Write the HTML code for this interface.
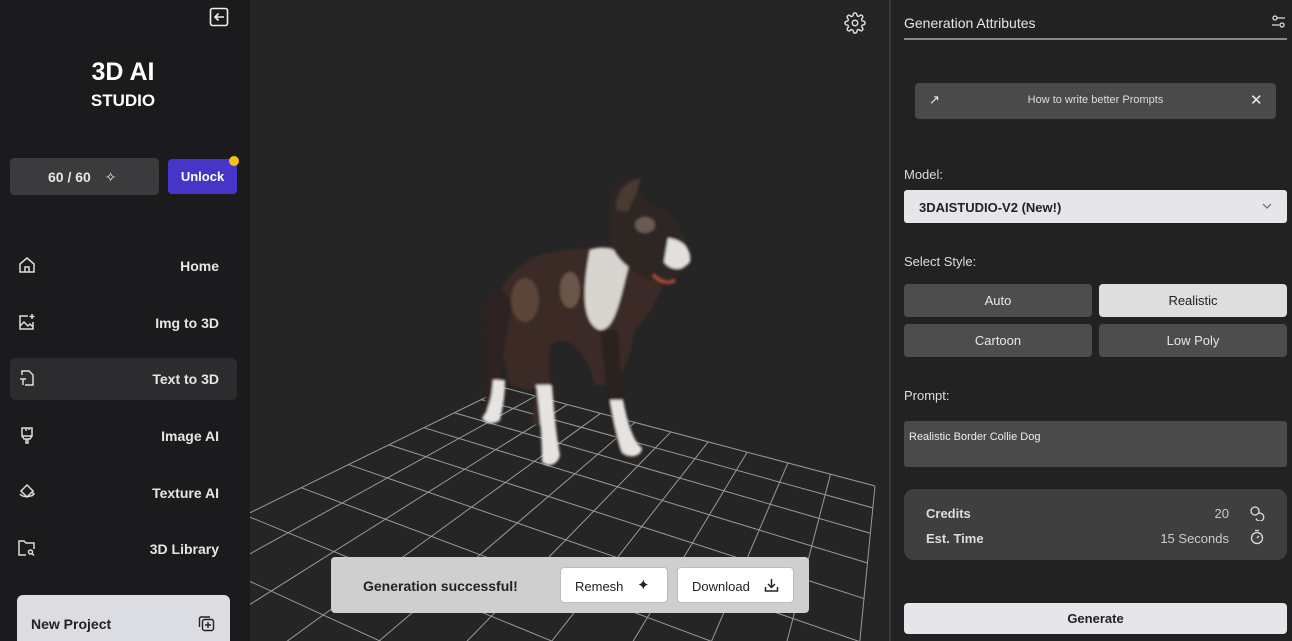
<!DOCTYPE html>
<html style="overflow:hidden;height:641px"><head><meta charset="utf-8"><style>
*{box-sizing:border-box;margin:0;padding:0}
body{width:1292px;height:641px;overflow:hidden;background:#242424;font-family:"Liberation Sans",sans-serif;position:relative}
.side{position:absolute;left:0;top:0;width:250px;height:641px;background:#1b1b1d;overflow:hidden}
.main{position:absolute;left:250px;top:0;width:639px;height:641px;background:#252525;overflow:hidden}
.right{position:absolute;left:889px;top:0;width:403px;height:641px;background:#222;border-left:2px solid #3a3a3a;overflow:hidden}
.abs{position:absolute}
.t{color:#e8e8e8}
.nav{position:absolute;left:10px;width:227px;height:42px;border-radius:6px;font-size:14px;font-weight:bold;color:#e6e6e6}
.nav span{position:absolute;right:18px;top:13px}
.nav svg{position:absolute;left:8px;top:11px}
.btn{position:absolute;border-radius:4px;font-size:13px;text-align:center;color:#e6e6e6}
</style></head><body>
<div class="side">
 <svg class="abs" style="left:209px;top:7px" width="20" height="20" viewBox="0 0 20 20" fill="none" stroke="#eee" stroke-width="1.6"><rect x="1.5" y="1.5" width="17" height="17" rx="2"/><path d="M15 10H6M9.5 6.5L6 10l3.5 3.5"/></svg>
 <div class="abs t" style="left:0;width:246px;top:58px;text-align:center;font-size:25px;font-weight:bold;color:#fff">3D AI</div>
 <div class="abs t" style="left:0;width:246px;top:91px;text-align:center;font-size:17px;font-weight:bold;color:#fff">STUDIO</div>
 <div class="abs" style="left:10px;top:158px;width:149px;height:37px;background:#3b3b3d;border-radius:4px;color:#e6e6e6;font-size:14px;font-weight:bold;padding:11px 0 0 38px">60 / 60 <span style="margin-left:10px;font-weight:normal">✧</span></div>
 <div class="abs" style="left:168px;top:159px;width:69px;height:35px;background:#4536c8;border-radius:4px;color:#fff;font-size:13px;font-weight:bold;text-align:center;line-height:35px">Unlock</div>
 <div class="abs" style="left:229px;top:156px;width:10px;height:10px;border-radius:50%;background:#f5c211"></div>
 <div class="nav" style="top:245px"><svg width="18" height="18" viewBox="0 0 18 18" fill="none" stroke="#ddd" stroke-width="1.5"><path d="M2 8L9 2l7 6v8H2z"/><path d="M7 16v-5h4v5"/></svg><span>Home</span></div>
 <div class="nav" style="top:302px"><svg width="18" height="18" viewBox="0 0 18 18" fill="none" stroke="#ddd" stroke-width="1.5"><path d="M10 3H2v13h13V9"/><path d="M2 13l4-4 4 4 2-2 3 3"/><path d="M14 1v5M11.5 3.5h5"/></svg><span>Img to 3D</span></div>
 <div class="nav" style="top:358px;background:#2c2c2e"><svg width="18" height="18" viewBox="0 0 18 18" fill="none" stroke="#ddd" stroke-width="1.5"><path d="M4 6V2h7l4 4v10H7"/><path d="M2 10h6M5 10v6"/></svg><span>Text to 3D</span></div>
 <div class="nav" style="top:415px"><svg width="18" height="18" viewBox="0 0 18 18" fill="none" stroke="#ddd" stroke-width="1.5"><path d="M4 2h10v8H4zM4 10l2 3h6l2-3M8 13v4h2v-4M8 2v3M11 2v2"/></svg><span>Image AI</span></div>
 <div class="nav" style="top:472px"><svg width="18" height="18" viewBox="0 0 18 18" fill="none" stroke="#ddd" stroke-width="1.5"><path d="M9 2l6 6-6 6-6-6z"/><path d="M2 11c2 3 10 4 14 0M14 9l2 2-2 2"/></svg><span>Texture AI</span></div>
 <div class="nav" style="top:528px"><svg width="18" height="18" viewBox="0 0 18 18" fill="none" stroke="#ddd" stroke-width="1.5"><path d="M8 16H1V2h5l2 2h8v6"/><circle cx="12.5" cy="13" r="2"/><path d="M14 14.5l2 2"/></svg><span>3D Library</span></div>
 <div class="abs" style="left:17px;top:595px;width:213px;height:46px;background:#dcdde2;border-radius:6px 6px 0 0;color:#222;font-size:14px;font-weight:bold;padding:21px 0 0 14px">New Project
  <svg class="abs" style="left:181px;top:20px" width="17" height="17" viewBox="0 0 17 17" fill="none" stroke="#222" stroke-width="1.4"><rect x="4.5" y="4.5" width="11" height="11" rx="2"/><path d="M12 2H3a1.5 1.5 0 0 0-1.5 1.5V12M10 7v6M7 10h6"/></svg></div>
</div>
<div class="main">
 <svg id="grid" class="abs" style="left:0;top:0" width="639" height="641"></svg>
 <svg class="abs" style="left:594px;top:12px" width="22" height="22" viewBox="0 0 24 24" fill="none" stroke="#ddd" stroke-width="1.6"><circle cx="12" cy="12" r="3"/><path d="M19.4 15a1.7 1.7 0 0 0 .3 1.8l.1.1a2 2 0 1 1-2.8 2.8l-.1-.1a1.7 1.7 0 0 0-1.8-.3 1.7 1.7 0 0 0-1 1.5V21a2 2 0 1 1-4 0v-.1a1.7 1.7 0 0 0-1.1-1.5 1.7 1.7 0 0 0-1.8.3l-.1.1a2 2 0 1 1-2.8-2.8l.1-.1a1.7 1.7 0 0 0 .3-1.8 1.7 1.7 0 0 0-1.5-1H3a2 2 0 1 1 0-4h.1a1.7 1.7 0 0 0 1.5-1.1 1.7 1.7 0 0 0-.3-1.8l-.1-.1a2 2 0 1 1 2.8-2.8l.1.1a1.7 1.7 0 0 0 1.8.3H9a1.7 1.7 0 0 0 1-1.5V3a2 2 0 1 1 4 0v.1a1.7 1.7 0 0 0 1 1.5 1.7 1.7 0 0 0 1.8-.3l.1-.1a2 2 0 1 1 2.8 2.8l-.1.1a1.7 1.7 0 0 0-.3 1.8V9a1.7 1.7 0 0 0 1.5 1H21a2 2 0 1 1 0 4h-.1a1.7 1.7 0 0 0-1.5 1z"/></svg>
 <svg class="abs" style="left:0;top:0" width="639" height="641">
  <defs><filter id="bl"><feGaussianBlur stdDeviation="1.2"/></filter></defs>
  <g filter="url(#bl)">
   <path d="M245 330 C240 300 255 270 290 255 C330 245 360 250 380 240 L400 230 C420 225 425 240 420 260 C410 300 395 320 385 330 C380 360 370 380 360 385 L345 385 C340 360 320 330 300 345 C295 370 290 390 280 390 L260 385 C255 360 250 345 245 330Z" fill="#3a2c26"/>
   <path d="M235 320 C232 300 240 290 250 288 L262 300 C258 330 252 360 248 395 L242 410 L235 408 C236 380 237 350 235 320Z" fill="#2e2420"/>
   <ellipse cx="275" cy="300" rx="14" ry="22" fill="#5a4538"/>
   <ellipse cx="320" cy="290" rx="10" ry="18" fill="#6b5648"/>
   <path d="M340 250 C355 245 370 250 380 260 C370 300 365 330 350 330 C335 325 330 300 340 250Z" fill="#d8d4d0"/>
   <path d="M360 200 C365 185 375 180 380 178 L388 185 L395 200 L420 215 C445 240 440 265 425 280 L400 280 C380 270 365 260 360 240Z" fill="#2f2724"/>
   <ellipse cx="395" cy="225" rx="10" ry="8" fill="#6a5a52"/>
   <path d="M390 180 C385 200 380 205 378 212 L366 210 C366 195 372 182 392 178Z" fill="#4a3a33"/>
   <path d="M418 238 C432 240 442 248 440 262 C432 272 420 270 414 262Z" fill="#e2e0de"/>
   <path d="M403 275 C410 282 420 285 425 280" stroke="#b04a3a" stroke-width="3" fill="none"/>
   <path d="M287 330 L300 335 L300 395 C303 410 305 420 300 425 L283 425 C282 410 285 400 286 390Z" fill="#3a2c26"/>
   <path d="M350 330 L368 330 L372 395 C378 420 385 440 390 452 C385 458 372 458 368 450 L358 400Z" fill="#2b211d"/>
   <path d="M243 380 L255 380 C255 400 252 410 250 420 C245 425 235 424 232 418 C238 410 242 400 243 380Z" fill="#e6e3e0"/>
   <path d="M286 385 L302 385 C304 410 306 435 310 455 C308 465 298 468 292 462 C292 440 290 410 286 385Z" fill="#e6e3e0"/>
   <path d="M360 400 L373 400 C376 420 382 440 392 448 C392 456 380 460 372 452 C368 440 363 420 360 400Z" fill="#e6e3e0"/>
  </g>
 </svg>
 <div class="abs" style="left:81px;top:557px;width:478px;height:56px;background:#cfcfcf;border-radius:4px">
  <div class="abs" style="left:32px;top:21px;font-size:14px;color:#222;font-weight:bold">Generation successful!</div>
  <div class="abs" style="left:229px;top:10px;width:108px;height:36px;background:#fff;border-radius:4px;border:1px solid #bbb;font-size:13px;color:#222;padding:11px 0 0 14px">Remesh <span style="position:absolute;left:76px;top:8px;font-size:15px">✦</span></div>
  <div class="abs" style="left:346px;top:10px;width:117px;height:36px;background:#fff;border-radius:4px;border:1px solid #bbb;font-size:13px;color:#222;padding:11px 0 0 14px">Download
   <svg class="abs" style="left:86px;top:10px" width="15" height="15" viewBox="0 0 15 15" fill="none" stroke="#222" stroke-width="1.5"><path d="M7.5 1v8M4 6l3.5 3.5L11 6M1.5 9v4h12V9"/></svg></div>
 </div>
</div>
<div class="right">
 <div class="abs" style="left:13px;top:15px;font-size:14px;color:#e6e6e6">Generation Attributes</div>
 <svg class="abs" style="left:380px;top:14px" width="15" height="15" viewBox="0 0 15 15" fill="none" stroke="#ddd" stroke-width="1.3"><circle cx="4" cy="4" r="2"/><path d="M6 4h8M1 11h7"/><circle cx="11" cy="11" r="2"/></svg>
 <div class="abs" style="left:13px;top:38px;width:383px;height:2px;background:#888"></div>
 <div class="abs" style="left:24px;top:83px;width:361px;height:36px;background:#4a4a4a;border-radius:4px">
  <div class="abs" style="left:0;width:361px;top:11px;text-align:center;font-size:11px;color:#ddd">How to write better Prompts</div>
  <div class="abs" style="left:14px;top:9px;color:#eee;font-size:13px">↗</div>
  <div class="abs" style="left:335px;top:8px;color:#eee;font-size:15px">✕</div>
 </div>
 <div class="abs" style="left:13px;top:167px;font-size:13px;color:#ddd">Model:</div>
 <div class="abs" style="left:13px;top:190px;width:383px;height:33px;background:#e6e6ea;border-radius:3px;font-size:13px;font-weight:bold;color:#222;padding:10px 0 0 15px">3DAISTUDIO-V2 (New!)
  <svg class="abs" style="left:358px;top:12px" width="10" height="8" viewBox="0 0 10 8" fill="none" stroke="#666" stroke-width="1.2"><path d="M1 2l4 4 4-4"/></svg></div>
 <div class="abs" style="left:13px;top:254px;font-size:13px;color:#ddd">Select Style:</div>
 <div class="btn" style="left:13px;top:284px;width:188px;height:33px;background:#4d4d4d;line-height:33px">Auto</div>
 <div class="btn" style="left:208px;top:284px;width:188px;height:33px;background:#dedede;color:#222;line-height:33px">Realistic</div>
 <div class="btn" style="left:13px;top:324px;width:188px;height:33px;background:#4d4d4d;line-height:33px">Cartoon</div>
 <div class="btn" style="left:208px;top:324px;width:188px;height:33px;background:#4d4d4d;line-height:33px">Low Poly</div>
 <div class="abs" style="left:13px;top:388px;font-size:13px;color:#ddd">Prompt:</div>
 <div class="abs" style="left:13px;top:421px;width:383px;height:46px;background:#4a4a4a;border-radius:3px;font-size:11px;color:#eee;padding:10px 0 0 5px">Realistic Border Collie Dog</div>
 <div class="abs" style="left:13px;top:489px;width:383px;height:71px;background:#3f3f3f;border-radius:10px">
  <div class="abs" style="left:22px;top:17px;font-size:13px;font-weight:bold;color:#ddd">Credits</div>
  <div class="abs" style="left:22px;top:42px;font-size:13px;font-weight:bold;color:#ddd">Est. Time</div>
  <div class="abs" style="right:58px;top:17px;font-size:13px;color:#ccc">20</div>
  <div class="abs" style="right:58px;top:42px;font-size:13px;color:#ccc">15 Seconds</div>
  <svg class="abs" style="left:345px;top:16px" width="16" height="16" viewBox="0 0 16 16" fill="none" stroke="#ddd" stroke-width="1.3"><circle cx="6" cy="6" r="4"/><path d="M9 8.5a4 4 0 1 1-2 5"/></svg>
  <svg class="abs" style="left:345px;top:40px" width="16" height="16" viewBox="0 0 16 16" fill="none" stroke="#ddd" stroke-width="1.3"><circle cx="8" cy="9" r="5.5"/><path d="M6 1.5h4M8 9l2-2"/></svg>
 </div>
 <div class="abs" style="left:13px;top:603px;width:383px;height:31px;background:#e6e6ea;border-radius:4px;font-size:13px;font-weight:bold;color:#222;text-align:center;line-height:31px">Generate</div>
</div>
<script>
(function(){
 var F=[255,388],R=[625,486],N=[560,1150],L=[-260,640];
 function H(p){
  var x0=F[0],y0=F[1],x1=R[0],y1=R[1],x2=N[0],y2=N[1],x3=L[0],y3=L[1];
  var dx1=x1-x2,dx2=x3-x2,dy1=y1-y2,dy2=y3-y2,sx=x0-x1+x2-x3,sy=y0-y1+y2-y3;
  var det=dx1*dy2-dx2*dy1;
  var g=(sx*dy2-dx2*sy)/det,h=(dx1*sy-sx*dy1)/det;
  var a=x1-x0+g*x1,b=x3-x0+h*x3,c=x0,d=y1-y0+g*y1,e=y3-y0+h*y3,f=y0;
  var u=p[0],v=p[1],w=g*u+h*v+1;
  return [(a*u+b*v+c)/w,(d*u+e*v+f)/w];
 }
 var n=10,s='';
 for(var i=0;i<=n;i++){
  var A=H([i/n,0]),B=H([i/n,1]),C=H([0,i/n]),D=H([1,i/n]);
  s+='<line x1="'+A[0]+'" y1="'+A[1]+'" x2="'+B[0]+'" y2="'+B[1]+'"/>';
  s+='<line x1="'+C[0]+'" y1="'+C[1]+'" x2="'+D[0]+'" y2="'+D[1]+'"/>';
 }
 document.getElementById('grid').innerHTML='<g stroke="#9a9a9a" stroke-width="1">'+s+'</g>';
})();
</script>
</body></html>
